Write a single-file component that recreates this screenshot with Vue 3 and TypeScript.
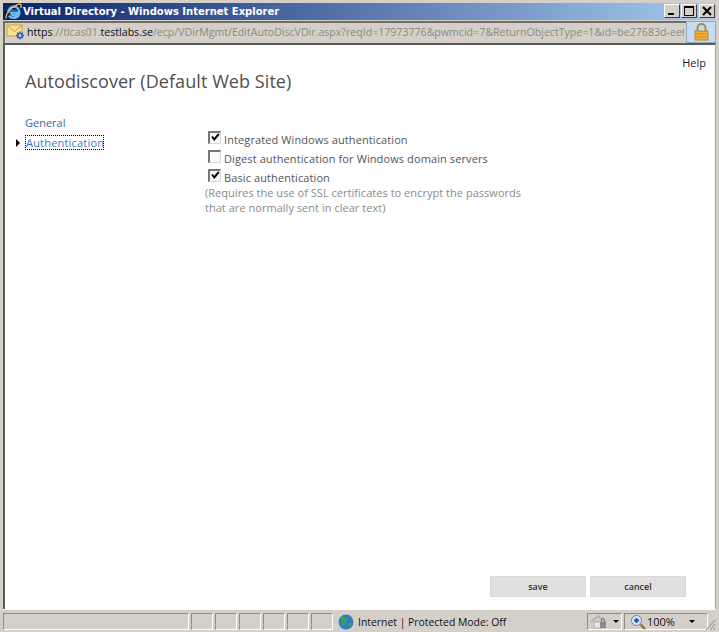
<script setup lang="ts">
const statusCells = [6, 7, 8, 9, 10, 11]
const options = [
  { label: 'Integrated Windows authentication', checked: true },
  { label: 'Digest authentication for Windows domain servers', checked: false },
  { label: 'Basic authentication', checked: true },
]
</script>

<template>
  <div class="window">
    <header class="titlebar">
      <svg class="ie" width="17" height="17" viewBox="0 0 17 17">
        <path d="M3.2 9.6C3.2 6 5.8 3.6 8.8 3.6s5.4 2.4 5.4 6H6.3C6.5 12.6 10.4 13.2 12 11h2.2C12.6 15.6 6.4 16 4 12.8" fill="none" stroke="#6cbcf0" stroke-width="2.4"/>
        <path d="M6 7.6H11.6" stroke="#1c6ec4" stroke-width="1.6"/>
        <path d="M1.2 15.5C-.2 12 6 4 13 1.3 15.8.3 17 2 15.6 5" fill="none" stroke="#f0bf3a" stroke-width="1.3"/>
      </svg>
      <span class="title">Virtual Directory - Windows Internet Explorer</span>
      <div class="controls">
        <button class="ctl"><svg width="12" height="10" viewBox="0 0 12 10"><rect x="2" y="7" width="6" height="2" fill="#000"/></svg></button>
        <button class="ctl"><svg width="12" height="10" viewBox="0 0 12 10"><path d="M1.5 1.5h9v8h-9z" fill="none" stroke="#000"/><rect x="1" y="0" width="10" height="2" fill="#000"/></svg></button>
        <button class="ctl close"><svg width="12" height="10" viewBox="0 0 12 10"><path d="M2 1l8 8M10 1l-8 8" stroke="#000" stroke-width="2"/></svg></button>
      </div>
    </header>
    <div class="addressbar">
      <div class="address">
        <svg class="envelope" width="20" height="18" viewBox="0 0 20 18">
          <rect x="1" y="2" width="15" height="11" fill="#f8e08c" stroke="#c9a43c"/>
          <path d="M1 2l7.5 6.5L16 2" fill="none" stroke="#c9a43c"/>
          <g stroke="#2f54a8" stroke-width="1.4">
            <path d="M14 8.5v8M10 12.5h8M11.2 9.7l5.6 5.6M16.8 9.7l-5.6 5.6"/>
          </g>
          <circle cx="14" cy="12.5" r="3" fill="#3d63b5"/>
          <circle cx="14" cy="12.5" r="1.3" fill="#cddcf5"/>
        </svg>
        <span class="url"><b>https</b>://tlcas01.<b>testlabs.se</b>/ecp/VDirMgmt/EditAutoDiscVDir.aspx?reqId=17973776&amp;pwmcid=7&amp;ReturnObjectType=1&amp;id=be27683d-ee6c</span>
      </div>
      <div class="lockbox">
        <svg width="15" height="18" viewBox="0 0 15 18">
          <path d="M3.5 8V5a4 4 0 0 1 8 0v3" fill="none" stroke="#a98a48" stroke-width="2"/>
          <rect x="1" y="8" width="13" height="9" fill="#eeb13a" stroke="#b8862a"/>
          <path d="M2 11h11M2 14h11" stroke="#cf8f24"/>
        </svg>
      </div>
    </div>
    <main class="page">
      <a class="help">Help</a>
      <h1>Autodiscover (Default Web Site)</h1>
      <div class="columns">
        <nav class="nav">
          <div class="nav-item">General</div>
          <div class="nav-item active"><span class="arrow"></span><span class="focus">Authentication</span></div>
        </nav>
        <section class="form">
          <label v-for="o in options" :key="o.label" class="opt">
            <span class="box">
              <svg v-if="o.checked" width="9" height="9" viewBox="0 0 9 9"><path d="M1 3.5l2.3 3L7.8 1" fill="none" stroke="#000" stroke-width="2"/></svg>
            </span>
            <span>{{ o.label }}</span>
          </label>
          <p class="note">(Requires the use of SSL certificates to encrypt the passwords<br>that are normally sent in clear text)</p>
        </section>
      </div>
      <div class="spacer"></div>
      <footer class="actions">
        <button class="btn">save</button>
        <button class="btn">cancel</button>
      </footer>
    </main>
    <footer class="statusbar">
      <div class="cell wide"></div>
      <div v-for="c in statusCells" :key="c" class="cell small"></div>
      <div class="zone">
        <svg width="16" height="16" viewBox="0 0 16 16">
          <circle cx="8" cy="8" r="7.5" fill="#2f7fc8"/>
          <path d="M3 4c2-2 5-2 6 0s-2 3-1 5-3 3-4 1-2-4-1-6zM11 9c2-1 3 0 3 1s-2 3-3 3-1-3 0-4z" fill="#3aa34a"/>
        </svg>
        <span>Internet | Protected Mode: Off</span>
      </div>
      <div class="cell tools">
        <svg width="20" height="16" viewBox="0 0 20 16">
          <path d="M1 8L8 2l7 6" fill="none" stroke="#b4b4b4" stroke-width="2"/>
          <rect x="4" y="8" width="8" height="6" fill="#e6e6e6" stroke="#aaa"/>
          <rect x="10" y="8" width="6" height="6" fill="#8a8a8a"/>
          <path d="M11.5 8V6a1.5 1.5 0 0 1 3 0v2" fill="none" stroke="#777"/>
        </svg>
        <span class="caret"></span>
      </div>
      <div class="cell zoom">
        <svg width="16" height="16" viewBox="0 0 16 16">
          <circle cx="6.5" cy="6.5" r="5" fill="#dbe8f8" stroke="#5b86c4"/>
          <path d="M4 6.5h5M6.5 4v5" stroke="#1f55b5" stroke-width="2"/>
          <path d="M10.5 10.5L15 15" stroke="#9a6b2e" stroke-width="2.4"/>
        </svg>
        <span class="pct">100%</span>
        <span class="caret"></span>
      </div>
      <svg class="grip" width="12" height="14" viewBox="0 0 12 14">
        <path d="M11 3L2 13M11 7L6 13M11 11L9.5 13" stroke="#8f8b84" stroke-width="1"/>
      </svg>
    </footer>
  </div>
</template>

<style>
html, body { margin: 0; padding: 0; background: #d4d0c8; }
</style>

<style scoped>
.window {
  width: 719px;
  height: 632px;
  display: flex;
  flex-direction: column;
  box-sizing: border-box;
  overflow: hidden;
  background: #d4d0c8;
  font-family: "Open Sans", sans-serif;
}
.titlebar {
  height: 17px;
  margin: 3px 3px 0 3px;
  padding-left: 2px;
  display: flex;
  align-items: center;
  background: linear-gradient(90deg, #0a246a, #a6caf0);
  flex: none;
}
.ie { flex: none; margin-right: 1px; }
.title {
  color: #fff;
  font: bold 10px "DejaVu Sans", sans-serif;
  white-space: nowrap;
}
.controls { margin-left: auto; display: flex; margin-right: 1px; align-self: flex-start; margin-top: 1px; }
.ctl {
  width: 16px;
  height: 14px;
  padding: 0;
  margin-left: 1px;
  background: #d4d0c8;
  border: 1px solid;
  border-color: #fff #404040 #404040 #fff;
  display: flex;
  align-items: center;
  justify-content: center;
}
.close { margin-left: 2px; }
.addressbar {
  height: 22px;
  margin: 1px 3px 0 3px;
  display: flex;
  flex: none;
}
.address {
  flex: 1;
  min-width: 0;
  display: flex;
  align-items: center;
  border-top: 2px solid #6f6d68;
  border-left: 2px solid #6f6d68;
  padding: 0 2px 2px 1px;
  overflow: hidden;
  background: #d4d0c8;
}
.envelope { flex: none; margin-right: 1px; }
.url {
  font: 10.6px "Open Sans", sans-serif;
  color: #8c8a85;
  white-space: nowrap;
  overflow: hidden;
}
.url b { font-weight: 400; color: #111; }
.lockbox {
  width: 30px;
  background: #c5dcf5;
  border: 1px solid #8fa8c4;
  box-sizing: border-box;
  display: flex;
  align-items: center;
  justify-content: center;
  flex: none;
}
.page {
  flex: 1;
  min-height: 0;
  margin: 0 3px;
  border-top: 2px solid #5c5a56;
  border-left: 2px solid #5c5a56;
  border-right: 1px solid #a9a6a0;
  background: #fff;
  display: flex;
  flex-direction: column;
  position: relative;
}
.help {
  position: absolute;
  right: 9px;
  top: 10px;
  font: 11px "Open Sans", sans-serif;
  color: #1b1b2b;
}
h1 {
  margin: 22px 0 0 20px;
  font: 400 18px "Open Sans", sans-serif;
  letter-spacing: 0.07px;
  line-height: 28px;
  color: #4f4f4f;
}
.columns { display: flex; margin-top: 19px; }
.nav { width: 200px; flex: none; padding-left: 20px; box-sizing: border-box; }
.nav-item {
  height: 20px;
  font: 11px/18px "Open Sans", sans-serif;
  color: #3b6a94;
  position: relative;
}
.arrow {
  position: absolute;
  left: -9px;
  top: 5px;
  border-left: 4px solid #000;
  border-top: 4px solid transparent;
  border-bottom: 4px solid transparent;
}
.focus {
  outline: 1px dotted #000;
  outline-offset: -1px;
  color: #3d7cc0;
  display: inline-block;
  height: 15px;
  line-height: 15px;
  width: 79px;
  padding-left: 1px;
  box-sizing: border-box;
  letter-spacing: 0.2px;
  white-space: nowrap;
}
.form { padding-top: 16px; }
.opt {
  height: 19px;
  display: flex;
  align-items: center;
  gap: 3px;
  margin-left: 3px;
  font: 11px "Open Sans", sans-serif;
  letter-spacing: 0.1px;
  color: #555;
  white-space: nowrap;
}
.box {
  width: 10px;
  height: 10px;
  border-style: solid;
  border-width: 2px 1px 1px 2px;
  border-color: #777 #d8d8d8 #d8d8d8 #777;
  background: #fafafa;
  display: flex;
  align-items: center;
  justify-content: center;
  flex: none;
  margin-top: -5px;
}
.note {
  margin: -2px 0 0;
  font: 11px/15px "Open Sans", sans-serif;
  letter-spacing: 0.03px;
  color: #8a8a8a;
  white-space: nowrap;
}
.spacer { flex: 1; }
.actions {
  display: flex;
  gap: 4px;
  justify-content: flex-end;
  padding-right: 29px;
  margin-bottom: 12px;
}
.btn {
  width: 96px;
  height: 21px;
  padding: 0;
  border: 1px solid #d9d9d9;
  background: #e0e0e0;
  font: 600 9px "Open Sans", sans-serif;
  color: #333;
}
.statusbar {
  height: 23px;
  flex: none;
  margin: 0 3px;
  padding: 3px 0 2px;
  display: flex;
  align-items: stretch;
  position: relative;
  gap: 2px;
  box-sizing: border-box;
  border-top: 1px solid #fff;
}
.cell {
  box-sizing: border-box;
  border: 1px solid;
  border-color: #8f8c85 #fff #fff #8f8c85;
  display: flex;
  align-items: center;
}
.wide { width: 186px; }
.small { width: 22px; }
.zone {
  display: flex;
  align-items: center;
  gap: 4px;
  width: 250px;
  padding-left: 3px;
  box-sizing: border-box;
  font: 10.4px "Open Sans", sans-serif;
  color: #111;
  white-space: nowrap;
}
.tools { width: 35px; padding-left: 2px; gap: 3px; }
.zoom { width: 84px; padding-left: 5px; font: 11px "Open Sans", sans-serif; color: #111; gap: 1px; }
.pct { margin-right: 13px; }
.caret { border-top: 3px solid #000; border-left: 3px solid transparent; border-right: 3px solid transparent; }
.grip { position: absolute; right: 0; bottom: 1px; }
</style>
